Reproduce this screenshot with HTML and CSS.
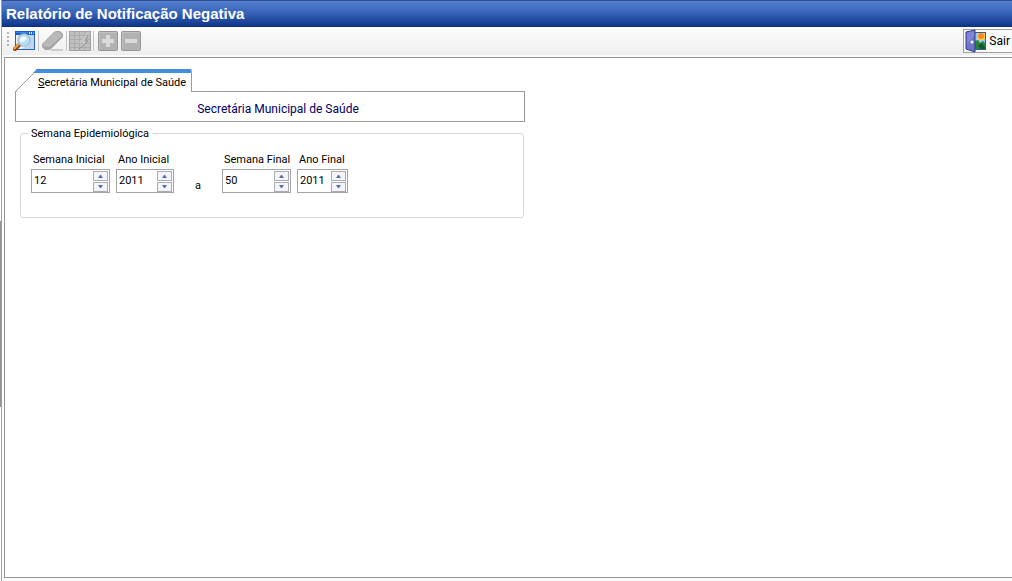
FILE: index.html
```html
<!DOCTYPE html>
<html lang="pt-BR">
<head>
<meta charset="utf-8">
<title>Relatório de Notificação Negativa</title>
<link rel="stylesheet" href="styles.css">
</head>
<body>
<div class="splitter"><span class="splitter-handle"></span></div>
<div class="window">
  <header class="titlebar"><h1>Relatório de Notificação Negativa</h1></header>
  <div class="toolbar" role="toolbar">
    <svg class="grip" width="3" height="20" viewBox="0 0 3 20"><path d="M1 1h2v2H1zM1 5h2v2H1zM1 9h2v2H1zM1 13h2v2H1z" fill="#b4b4b4"/></svg>
    <button class="tool tool-view" type="button" aria-label="Visualizar">
      <svg width="24" height="22" viewBox="0 0 24 22">
        <path d="M3 1h20v19H3z" fill="#2b62b4"/><path d="M3 1h20v4H3z" fill="#1560cf"/><path d="M4 2h12v1H4z" fill="#3f86e2"/><path d="M17 2h1v2h-1zM19 2h1v2h-1z" fill="#fff"/><path d="M21 2h1v2h-1z" fill="#e8835a"/>
        <path d="M4 5h18v14H4z" fill="#e9f0fa"/><path d="M18 5h4v14H10l6-4z" fill="#bed5f0"/>
        <path d="M3 19l4-4" stroke="#864009" stroke-width="4" stroke-linecap="round"/><path d="M2 19l5-5" stroke="#f3a34b" stroke-width="2"/>
        <circle cx="12" cy="10" r="6" fill="#b5dff7" stroke="#a9bfd0" stroke-width="1.500"/><path d="M8 10a4 4 0 0 1 6-3l1 2-6 4z" fill="#f4fcff"/>
      </svg>
    </button>
    <span class="sep"></span>
    <button class="tool tool-clear" type="button" aria-label="Limpar" disabled>
      <svg width="24" height="22" viewBox="0 0 24 22">
        <path d="M1 14L13 2q1-1 3-1h3l3 3v3L10 19q-1 1-3 1H4l-3-3z" fill="#a4a4a4"/><path d="M2 14L13 3q1-1 3-1h2l3 3L10 15l-2 1H4z" fill="#b8b8b8"/><path d="M2 15l3 1h4L21 5" fill="none" stroke="#c2c2c2"/><path d="M10 20h12" stroke="#a6a6a6"/>
      </svg>
    </button>
    <span class="sep sep-tight"></span>
    <button class="tool tool-grid" type="button" aria-label="Processar" disabled>
      <svg width="22" height="22" viewBox="0 0 22 22">
        <path d="M0 1h22v20H0z" fill="#a2a2a2"/><path d="M1 2h20v18H1z" fill="#c0c0c0"/>
        <path d="M1 5.500h20M1 9.500h20M1 13.500h20M1 17.500h20M5.500 2v18M10.500 2v18M15.500 2v18" stroke="#acacac"/>
        <path d="M16 6h3l-3 5h3l-9 8 4-6h-4z" fill="#c8c8c8"/><path d="M19 6l-3 5h3l-9 8" fill="none" stroke="#8e8e8e"/>
      </svg>
    </button>
    <span class="sep sep-wide"></span>
    <button class="tool tool-add" type="button" aria-label="Adicionar" disabled>
      <svg width="20" height="20" viewBox="0 0 20 20"><rect x=".5" y=".5" width="19" height="19" rx="1" fill="#b2b2b2" stroke="#969696"/><path d="M1.500 18V1.500H18" fill="none" stroke="#c2c2c2"/><path d="M8 4h4v4h4v4h-4v4H8v-4H4V8h4z" fill="#dadada"/></svg>
    </button>
    <button class="tool tool-remove" type="button" aria-label="Remover" disabled>
      <svg width="20" height="20" viewBox="0 0 20 20"><rect x=".5" y=".5" width="19" height="19" rx="1" fill="#b2b2b2" stroke="#969696"/><path d="M1.500 18V1.500H18" fill="none" stroke="#c2c2c2"/><path d="M4 8h12v4H4z" fill="#dadada"/></svg>
    </button>
    <button class="exit" type="button">
      <svg width="21" height="24" viewBox="0 0 21 24">
        <path d="M9 3h12v18H9z" fill="#355c9a"/><path d="M10 4h10v12H10z" fill="#91cdf3"/><path d="M12 4h8v7h-8z" fill="#ffc653"/><circle cx="16" cy="7" r="3" fill="#f58d22"/><path d="M10 12l3-1 2 3 3-2 2 2v6H10z" fill="#26863a"/><path d="M13 16l4-2 3 4v2h-5z" fill="#155b30"/>
        <path d="M1 3l9-2v22l-9-3z" fill="#6f74cb" stroke="#353b82"/><path d="M2 4l7-2v5L2 15z" fill="#8185d6"/><circle cx="7" cy="13" r="1.500" fill="#fff"/>
      </svg>
      <span>Sair</span>
    </button>
  </div>
  <main class="content">
    <section class="tabs">
      <button class="tab" type="button" role="tab" aria-selected="true">
        <svg class="tab-slope" width="21" height="24" viewBox="0 0 21 24"><path d="M0 24L21 3V24z" fill="#fff"/><path d="M.5 24V22.500L20 3" fill="none" stroke="#9b9b9b"/><path d="M18 4l4-4v4z" fill="#438ddf"/></svg>
        <span class="tab-label"><u>S</u>ecretária Municipal de Saúde</span>
      </button>
      <div class="tab-panel" role="tabpanel">Secretária Municipal de Saúde</div>
    </section>
    <fieldset class="group">
      <legend>Semana Epidemiológica</legend>
      <div class="fields">
        <div class="field field-wide">
          <label for="semana-inicial">Semana Inicial</label>
          <div class="spin"><input id="semana-inicial" type="text" inputmode="numeric" value="12"><span class="arrows"><button type="button" aria-label="Aumentar semana inicial"><svg width="7" height="4" viewBox="0 0 7 4"><path d="M1 4l2-3h1l2 3z"/></svg></button><button type="button" aria-label="Diminuir semana inicial"><svg width="7" height="4" viewBox="0 0 7 4"><path d="M1 0l2 3h1l2-3z"/></svg></button></span></div>
        </div>
        <div class="field field-medium">
          <label for="ano-inicial">Ano Inicial</label>
          <div class="spin"><input id="ano-inicial" type="text" inputmode="numeric" value="2011"><span class="arrows"><button type="button" aria-label="Aumentar ano inicial"><svg width="7" height="4" viewBox="0 0 7 4"><path d="M1 4l2-3h1l2 3z"/></svg></button><button type="button" aria-label="Diminuir ano inicial"><svg width="7" height="4" viewBox="0 0 7 4"><path d="M1 0l2 3h1l2-3z"/></svg></button></span></div>
        </div>
        <span class="until">a</span>
        <div class="field field-week">
          <label for="semana-final">Semana Final</label>
          <div class="spin"><input id="semana-final" type="text" inputmode="numeric" value="50"><span class="arrows"><button type="button" aria-label="Aumentar semana final"><svg width="7" height="4" viewBox="0 0 7 4"><path d="M1 4l2-3h1l2 3z"/></svg></button><button type="button" aria-label="Diminuir semana final"><svg width="7" height="4" viewBox="0 0 7 4"><path d="M1 0l2 3h1l2-3z"/></svg></button></span></div>
        </div>
        <div class="field field-year">
          <label for="ano-final">Ano Final</label>
          <div class="spin"><input id="ano-final" type="text" inputmode="numeric" value="2011"><span class="arrows"><button type="button" aria-label="Aumentar ano final"><svg width="7" height="4" viewBox="0 0 7 4"><path d="M1 4l2-3h1l2 3z"/></svg></button><button type="button" aria-label="Diminuir ano final"><svg width="7" height="4" viewBox="0 0 7 4"><path d="M1 0l2 3h1l2-3z"/></svg></button></span></div>
        </div>
      </div>
    </fieldset>
  </main>
</div>
</body>
</html>
```
FILE: styles.css
```css
* { box-sizing: border-box; }
body {
  margin: 0;
  min-height: 100vh;
  display: flex;
  background: #fff;
  color: #000;
  font: 11px/14px "Trebuchet MS", Roboto, "Open Sans", sans-serif;
}
button, input { font: inherit; color: inherit; margin: 0; padding: 0; }
button { border: 0; background: none; }
svg { display: block; flex: none; }
.splitter {
  width: 2px;
  flex: none;
  border-right: 1px solid #a0a0a0;
}
.splitter-handle {
  display: block;
  height: 32vh;
  margin-top: 38vh;
  background: #929292;
}
.window {
  flex: 1;
  min-width: 0;
  display: flex;
  flex-direction: column;
  background: #fbfbfb;
}
.titlebar {
  height: 27px;
  padding: 4px;
  border-top: 1px solid #2e4d8f;
  background: linear-gradient(#5580cf, #3763b8 45%, #1d459a 80%, #0d3180);
}
.titlebar h1 {
  margin: 0;
  color: #fff;
  font: bold 15px/18px "Liberation Sans", Arial, sans-serif;
}
.toolbar {
  height: 28px;
  padding-left: 4px;
  display: flex;
  align-items: center;
  background: linear-gradient(#fcfcfc, #eee);
}
.grip { margin-right: 3px; }
.sep {
  width: 1px;
  height: 20px;
  margin: 0 2px;
  background: #c5c5c5;
}
.sep-tight { margin: 0 2px 0 1px; }
.sep-wide { margin: 0 4px 0 2px; }
.tool-add { margin-right: 3px; }
.exit {
  height: 24px;
  margin-left: auto;
  padding: 0 2px 0 1px;
  display: flex;
  align-items: center;
  gap: 3px;
  border: 1px solid #a0a0a0;
  border-right: 0;
  background: #fafafa;
  font-size: 12px;
}
.content {
  flex: 1;
  margin: 2px 0 3px 2px;
  padding: 11px 10px;
  border: 1px solid #969696;
  border-right: 0;
  background: #fff;
}
.tabs { max-width: 510px; }
.tab {
  display: flex;
  margin-bottom: -2px;
  position: relative;
}
.tab-label {
  height: 23px;
  padding: 3px 5px 0 2px;
  border-top: 4px solid #438ddf;
  border-right: 1px solid #9b9b9b;
  border-top-right-radius: 2px;
  background: #fff;
}
.tab-panel {
  padding: 10px 0 5px 16px;
  border: 1px solid #9b9b9b;
  color: #000066;
  text-align: center;
  font-size: 12px;
}
.group {
  max-width: 504px;
  margin: 3px 0 0 5px;
  padding: 12px 10px 24px;
  border: 1px solid #d5d9de;
  border-radius: 3px;
}
.group legend {
  padding: 2px 3px 0;
  margin-left: -3px;
}
.fields {
  display: flex;
  gap: 6px;
}
.field label {
  display: block;
  margin-bottom: 2px;
  padding-left: 2px;
  white-space: nowrap;
}
.field-wide { width: 79px; }
.field-medium { width: 58px; }
.field-week { width: 69px; }
.field-year { width: 51px; }
.until {
  align-self: flex-end;
  width: 36px;
  text-align: center;
}
.spin {
  height: 24px;
  display: flex;
  border: 1px solid #a3a3aa;
  background: #fff;
}
.spin input {
  flex: 1;
  min-width: 0;
  padding-left: 2px;
  border: 0;
  outline: 0;
  background: none;
}
.arrows {
  display: flex;
  flex-direction: column;
  gap: 1px;
  padding: 1px 1px 0 0;
}
.arrows button {
  width: 15px;
  height: 10px;
  display: grid;
  place-items: center;
  border: 1px solid #aaabb3;
  background: #f4f5fa;
}
.arrows path { fill: #5c6da9; }
```
